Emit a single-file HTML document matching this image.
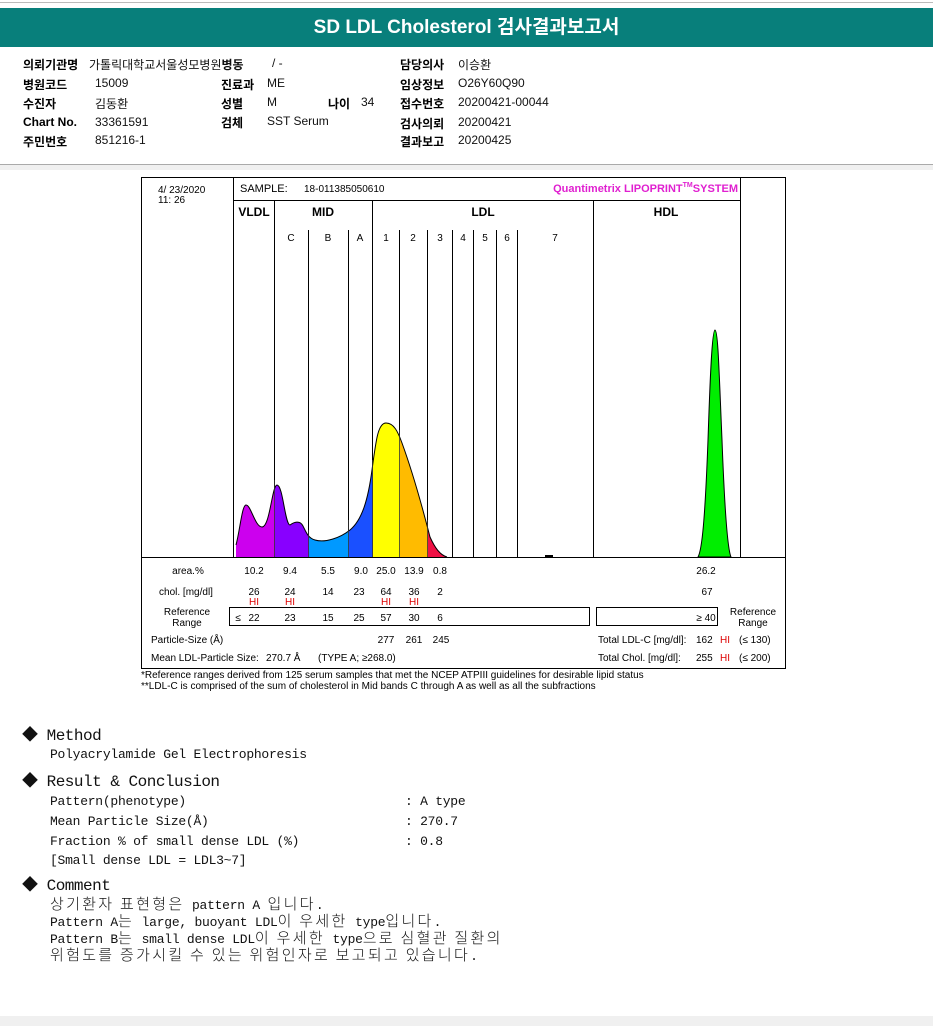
<!DOCTYPE html>
<html><head><meta charset="utf-8"><style>
body{margin:0;width:933px;height:1026px;background:#fff;position:relative;font-family:"Liberation Sans","Noto Sans CJK KR",sans-serif;overflow:hidden}
.a{position:absolute;white-space:nowrap}
.h{font-weight:bold;font-size:12px;color:#000}
.v{font-size:12px;color:#111}
.m{font-family:"Liberation Mono","Noto Sans CJK KR",monospace;font-size:13px;letter-spacing:-0.25px;color:#111}
.c{line-height:17px;height:17px}
.t{font-family:"Liberation Mono","Noto Sans CJK KR",monospace;font-size:16px;color:#111;letter-spacing:-0.5px}
k{font-family:"Noto Sans CJK KR",sans-serif;font-size:15px;letter-spacing:2.3px;font-weight:300;line-height:17px}
</style></head><body>
<div class="a" style="left:0;top:2px;width:933px;height:1px;background:#bbb"></div>
<div class="a" style="left:0;top:8px;width:933px;height:39px;background:#087f7b;color:#fff;font-weight:bold;font-size:19px;text-align:center;line-height:39px">SD LDL Cholesterol 검사결과보고서</div>
<div class="a h" style="left:23px;top:56px">의뢰기관명</div><div class="a v" style="left:89px;top:56px">가톨릭대학교서울성모병원<b>병동</b></div><div class="a v" style="left:272px;top:56px">/ -</div>
<div class="a h" style="left:23px;top:76px">병원코드</div><div class="a v" style="left:95px;top:76px">15009</div>
<div class="a h" style="left:23px;top:95px">수진자</div><div class="a v" style="left:95px;top:95px">김동환</div>
<div class="a h" style="left:23px;top:115px">Chart No.</div><div class="a v" style="left:95px;top:115px">33361591</div>
<div class="a h" style="left:23px;top:133px">주민번호</div><div class="a v" style="left:95px;top:133px">851216-1</div>
<div class="a h" style="left:221px;top:76px">진료과</div><div class="a v" style="left:267px;top:76px">ME</div>
<div class="a h" style="left:221px;top:95px">성별</div><div class="a v" style="left:267px;top:95px">M</div><div class="a h" style="left:328px;top:95px">나이</div><div class="a v" style="left:361px;top:95px">34</div>
<div class="a h" style="left:221px;top:114px">검체</div><div class="a v" style="left:267px;top:114px">SST Serum</div>
<div class="a h" style="left:400px;top:56px">담당의사</div><div class="a v" style="left:458px;top:56px">이승환</div>
<div class="a h" style="left:400px;top:76px">임상정보</div><div class="a v" style="left:458px;top:76px">O26Y60Q90</div>
<div class="a h" style="left:400px;top:95px">접수번호</div><div class="a v" style="left:458px;top:95px">20200421-00044</div>
<div class="a h" style="left:400px;top:115px">검사의뢰</div><div class="a v" style="left:458px;top:115px">20200421</div>
<div class="a h" style="left:400px;top:133px">결과보고</div><div class="a v" style="left:458px;top:133px">20200425</div>
<div class="a" style="left:0;top:164px;width:933px;height:1px;background:#aaa"></div>
<div class="a" style="left:0;top:165px;width:933px;height:5px;background:#f0f0f0"></div>

<svg class="a" style="left:0;top:0" width="933" height="700" font-family="Liberation Sans,sans-serif">
<defs><clipPath id="c"><path d="M236,557 L236,545 C240,530 242,505 246,505 C251,505 255,527 262,527 C270,527 272,485 277,485 C283,485 285,525 290,525 C294,522 300,520 303,526 C306,532 308,538 315,540 C325,543 340,538 350,530 C362,520 368,500 372,470 C376,440 378,423 386,423 C394,423 398,432 402,443 C410,465 418,490 430,537 C435,548 440,555 447,557 Z"/></clipPath></defs>
<rect x="141.5" y="177.5" width="644" height="491" fill="#fff" stroke="#000"/>
<g stroke="#000" stroke-width="1">
<line x1="233.5" y1="177" x2="233.5" y2="557"/><line x1="740.5" y1="177" x2="740.5" y2="557"/>
<line x1="233" y1="200.5" x2="740" y2="200.5"/>
<line x1="274.5" y1="200" x2="274.5" y2="557"/><line x1="372.5" y1="200" x2="372.5" y2="557"/><line x1="593.5" y1="200" x2="593.5" y2="557"/>
<line x1="308.5" y1="230" x2="308.5" y2="557"/><line x1="348.5" y1="230" x2="348.5" y2="557"/><line x1="399.5" y1="230" x2="399.5" y2="557"/><line x1="427.5" y1="230" x2="427.5" y2="557"/><line x1="452.5" y1="230" x2="452.5" y2="557"/><line x1="473.5" y1="230" x2="473.5" y2="557"/><line x1="496.5" y1="230" x2="496.5" y2="557"/><line x1="517.5" y1="230" x2="517.5" y2="557"/>
<line x1="141" y1="557.5" x2="785" y2="557.5"/>
</g>
<g clip-path="url(#c)">
<rect x="230" y="400" width="45" height="160" fill="#cc00ee"/><rect x="275" y="400" width="34" height="160" fill="#8800ff"/><rect x="309" y="400" width="40" height="160" fill="#0099ff"/><rect x="349" y="400" width="24" height="160" fill="#1a50ff"/><rect x="373" y="400" width="27" height="160" fill="#ffff00"/><rect x="400" y="400" width="28" height="160" fill="#ffbb00"/><rect x="428" y="400" width="25" height="160" fill="#ee1144"/>
</g>
<path d="M236,545 C240,530 242,505 246,505 C251,505 255,527 262,527 C270,527 272,485 277,485 C283,485 285,525 290,525 C294,522 300,520 303,526 C306,532 308,538 315,540 C325,543 340,538 350,530 C362,520 368,500 372,470 C376,440 378,423 386,423 C394,423 398,432 402,443 C410,465 418,490 430,537 C435,548 440,555 447,557" fill="none" stroke="#000" stroke-width="1"/>
<g stroke="#333" stroke-width="0.8"><line x1="274.5" y1="480" x2="274.5" y2="557"/><line x1="308.5" y1="530" x2="308.5" y2="557"/><line x1="348.5" y1="520" x2="348.5" y2="557"/><line x1="372.5" y1="460" x2="372.5" y2="557"/><line x1="399.5" y1="430" x2="399.5" y2="557"/><line x1="427.5" y1="520" x2="427.5" y2="557"/></g>
<path d="M698,557 C702,550 705,520 708,440 C710,380 712,330 715,330 C718,330 719,370 722,440 C725,520 728,550 731,557 Z" fill="#00ee00" stroke="#000"/>
<line x1="545" y1="556" x2="553" y2="556" stroke="#000" stroke-width="2"/>
<text x="158" y="193" font-size="10">4/ 23/2020</text><text x="158" y="203" font-size="10">11: 26</text>
<text x="240" y="192" font-size="11">SAMPLE:</text><text x="304" y="192" font-size="10">18-011385050610</text>
<text x="738" y="192" font-size="11" font-weight="bold" fill="#e020d0" text-anchor="end">Quantimetrix LIPOPRINT<tspan font-size="7" dy="-5">TM</tspan><tspan dy="5">SYSTEM</tspan></text>
<g font-size="12" font-weight="bold" text-anchor="middle"><text x="254" y="216">VLDL</text><text x="323" y="216">MID</text><text x="483" y="216">LDL</text><text x="666" y="216">HDL</text></g>
<g font-size="10" text-anchor="middle"><text x="291" y="241">C</text><text x="328" y="241">B</text><text x="360" y="241">A</text><text x="386" y="241">1</text><text x="413" y="241">2</text><text x="440" y="241">3</text><text x="463" y="241">4</text><text x="485" y="241">5</text><text x="507" y="241">6</text><text x="555" y="241">7</text></g>
<g font-size="10" text-anchor="middle">
<text x="188" y="574">area.%</text><text x="254" y="574">10.2</text><text x="290" y="574">9.4</text><text x="328" y="574">5.5</text><text x="361" y="574">9.0</text><text x="386" y="574">25.0</text><text x="414" y="574">13.9</text><text x="440" y="574">0.8</text><text x="706" y="574">26.2</text>
<text x="186" y="595">chol. [mg/dl]</text><text x="254" y="595">26</text><text x="290" y="595">24</text><text x="328" y="595">14</text><text x="359" y="595">23</text><text x="386" y="595">64</text><text x="414" y="595">36</text><text x="440" y="595">2</text><text x="707" y="595">67</text>
<text x="254" y="605" fill="#d00">HI</text><text x="290" y="605" fill="#d00">HI</text><text x="386" y="605" fill="#d00">HI</text><text x="414" y="605" fill="#d00">HI</text>
<text x="187" y="615">Reference</text><text x="187" y="626">Range</text><text x="753" y="615">Reference</text><text x="753" y="626">Range</text>
<text x="238" y="621">≤</text><text x="254" y="621">22</text><text x="290" y="621">23</text><text x="328" y="621">15</text><text x="359" y="621">25</text><text x="386" y="621">57</text><text x="414" y="621">30</text><text x="440" y="621">6</text><text x="706" y="621">≥ 40</text>
<text x="386" y="643">277</text><text x="414" y="643">261</text><text x="441" y="643">245</text>
</g>
<rect x="229.5" y="607.5" width="360" height="18" fill="none" stroke="#000"/><rect x="596.5" y="607.5" width="121" height="18" fill="none" stroke="#000"/>
<g font-size="10"><text x="151" y="643">Particle-Size (Å)</text>
<text x="151" y="661">Mean LDL-Particle Size:</text><text x="266" y="661">270.7 Å</text><text x="318" y="661">(TYPE A; ≥268.0)</text>
<text x="598" y="643">Total LDL-C [mg/dl]:</text><text x="696" y="643">162</text><text x="720" y="643" fill="#d00">HI</text><text x="739" y="643">(≤ 130)</text>
<text x="598" y="661">Total Chol. [mg/dl]:</text><text x="696" y="661">255</text><text x="720" y="661" fill="#d00">HI</text><text x="739" y="661">(≤ 200)</text>
<text x="141" y="678">*Reference ranges derived from 125 serum samples that met the NCEP ATPIII guidelines for desirable lipid status</text>
<text x="141" y="689">**LDL-C is comprised of the sum of cholesterol in Mid bands C through A as well as all the subfractions</text></g>
</svg>

<div class="a t" style="left:22px;top:721px">◆ Method</div>
<div class="a m" style="left:50px;top:747px">Polyacrylamide Gel Electrophoresis</div>
<div class="a t" style="left:22px;top:767px">◆ Result &amp; Conclusion</div>
<div class="a m" style="left:50px;top:794px">Pattern(phenotype)</div>
<div class="a m" style="left:50px;top:814px">Mean Particle Size(Å)</div>
<div class="a m" style="left:50px;top:834px">Fraction % of small dense LDL (%)</div>
<div class="a m" style="left:50px;top:853px">[Small dense LDL = LDL3~7]</div>
<div class="a m" style="left:405px;top:794px">:  A type</div>
<div class="a m" style="left:405px;top:814px">:  270.7</div>
<div class="a m" style="left:405px;top:834px">:  0.8</div>
<div class="a t" style="left:22px;top:871px">◆ Comment</div>
<div class="a m c" style="left:50px;top:895px"><k>상기환자 표현형은</k> pattern A <k>입니다</k>.</div>
<div class="a m c" style="left:50px;top:912px">Pattern A<k>는</k> large, buoyant LDL<k>이 우세한</k> type<k>입니다</k>.</div>
<div class="a m c" style="left:50px;top:929px">Pattern B<k>는</k> small dense LDL<k>이 우세한</k> type<k>으로 심혈관 질환의</k></div>
<div class="a m c" style="left:50px;top:946px"><k>위험도를 증가시킬 수 있는 위험인자로 보고되고 있습니다</k>.</div>
<div class="a" style="left:0;top:1016px;width:933px;height:10px;background:#f0f0f0"></div>
</body></html>
